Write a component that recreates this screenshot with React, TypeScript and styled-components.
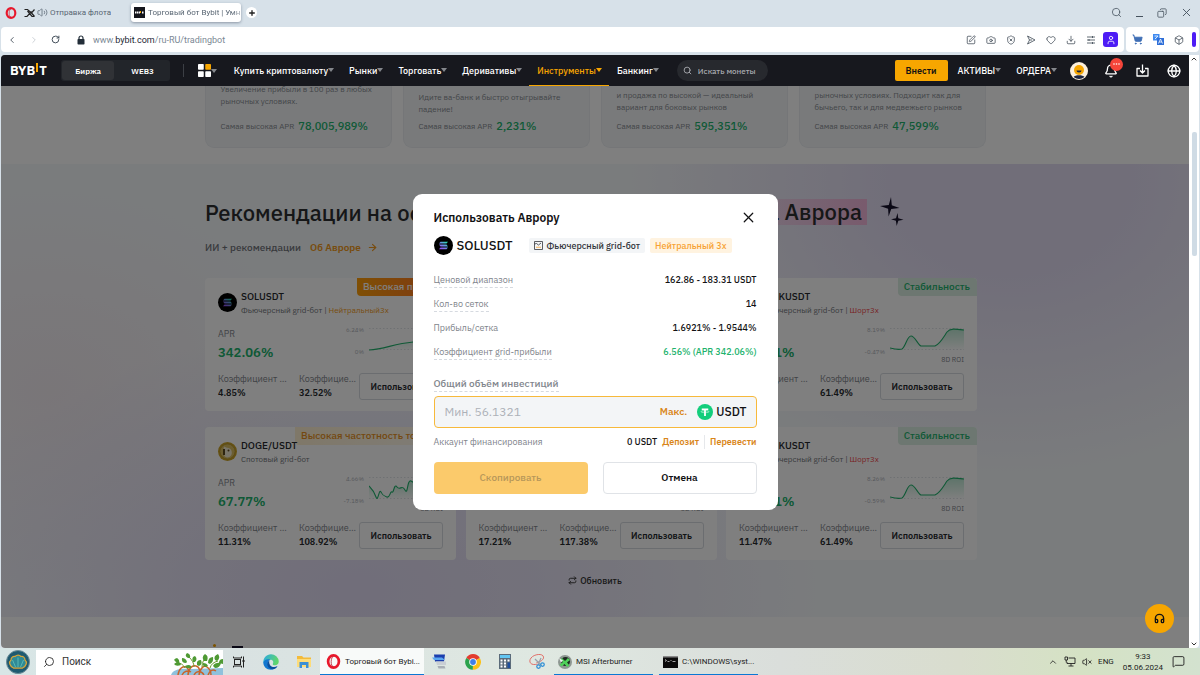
import React from 'react';
import styled, { createGlobalStyle, css } from 'styled-components';
import {
  Search, Copy, X, ChevronLeft, ChevronRight, ChevronUp, ChevronDown, RotateCw, SquarePen, Camera,
  ShieldX, Heart, Download, User, ShoppingCart, Box, Bell, Globe,
  Volume2, Plus, ArrowRight, Repeat, Headphones, VolumeX, MessageSquare,
} from 'lucide-react';

const SITE = '"IBM Plex Sans", "Noto Sans", sans-serif';
const SYSTEM = '"Segoe UI", Roboto, "Noto Sans", sans-serif';

const Global = createGlobalStyle`
  * { box-sizing: border-box; }
  html, body, #root { height: 100%; }
  body { margin: 0; overflow: hidden; background: #d7e1e9; font-family: ${SITE}; }
  button, input { font-family: inherit; border: 0; padding: 0; margin: 0; background: none; color: inherit; }
  a { color: inherit; text-decoration: none; }
  h1, h2, h3, p, dl, dd, dt { margin: 0; font-weight: inherit; font-size: inherit; }
  svg { display: block; flex: none; }
`;

const Window = styled.div`
  display: flex;
  flex-direction: column;
  height: 100%;
`;

/* ---------- browser chrome ---------- */

const TabStrip = styled.div`
  display: flex;
  align-items: center;
  height: 27px;
  flex: none;
  padding: 0 7px 2px 5px;
  font: 8px/12px ${SYSTEM};
  color: #596673;
`;

const Tab = styled.button<{ $active?: boolean }>`
  display: flex;
  align-items: center;
  gap: 3px;
  height: 19px;
  white-space: nowrap;
  overflow: hidden;
  font-size: 8px;
  ${p => p.$active
    ? css`width: 110px; margin-left: 20px; padding: 0 3px; background: #fff; border-radius: 3px; box-shadow: 0 1px 3px #8b97a5;
        span { -webkit-mask-image: linear-gradient(90deg, #000 80%, transparent); }`
    : css`margin-left: 7px; gap: 2px;`}
`;

const TabSiteIcon = styled.i`
  display: grid;
  place-items: center;
  flex: none;
  width: 11px;
  height: 11px;
  background: #14151c;
`;

const NewTab = styled.button`
  display: grid;
  place-items: center;
  width: 11px;
  height: 11px;
  margin-left: 5px;
  border-radius: 50%;
  background: #fff;
  color: #222;
`;

const WindowButtons = styled.div`
  display: flex;
  align-items: center;
  gap: 13px;
  margin-left: auto;
  color: #46525e;
`;

const IconButton = styled.button`
  display: grid;
  place-items: center;
`;

const ToolRow = styled.div`
  display: flex;
  gap: 2px;
  height: 25px;
  flex: none;
  padding: 0 1px;
`;

const AddressBar = styled.div`
  display: flex;
  align-items: center;
  flex: 1;
  padding: 0 6px;
  background: #fff;
  border-radius: 4px;
  color: #3b4652;
`;

const NavButtons = styled.div`
  display: flex;
  gap: 12px;
  margin-right: 17px;
`;

const Url = styled.a`
  flex: 1;
  margin-left: 8px;
  font: 9px/14px ${SYSTEM};
  color: #7b8894;
  b { font-weight: 400; color: #1d2733; }
`;

const ToolIcons = styled.div`
  display: flex;
  align-items: center;
  gap: 10px;
`;

const ProfileButton = styled(IconButton)`
  width: 15px;
  height: 15px;
  margin-left: -3px;
  border-radius: 3px;
  background: #4d1cf5;
  color: #fff;
`;

const ExtensionBar = styled.div`
  display: flex;
  align-items: center;
  gap: 10px;
  padding: 0 3px 0 6px;
  background: #fff;
  border-radius: 4px;
  color: #3b4652;
`;

const SidebarGrip = styled.i`
  width: 4px;
  height: 15px;
  margin-left: -2px;
  border-radius: 2px;
  background: #4d1cf5;
`;

/* ---------- page frame ---------- */

const Viewport = styled.div`
  display: flex;
  flex: 1;
  min-height: 0;
  margin: 3px 1px 0;
  border-radius: 4px 0 4px 4px;
  overflow: hidden;
  background: #fff;
`;

const Site = styled.div`
  position: relative;
  display: flex;
  flex-direction: column;
  flex: 1;
  min-width: 0;
  overflow: hidden;
`;

const ScrollBar = styled.div`
  display: flex;
  flex-direction: column;
  align-items: center;
  width: 10px;
  color: #333;
`;

const ScrollThumb = styled.i`
  width: 5px;
  height: 124px;
  margin: 69px 0 auto;
  border-radius: 2px;
  background: #cfdbe5;
`;

/* ---------- site header ---------- */

const Header = styled.header`
  position: relative;
  z-index: 2;
  display: flex;
  align-items: center;
  height: 31px;
  flex: none;
  padding: 0 8px 0 9px;
  background: #17181e;
  color: #fff;
`;

const Logo = styled.a`
  display: flex;
  align-items: center;
  gap: 1px;
  font: 700 13px/16px ${SITE};
  i { width: 2px; height: 9px; margin-bottom: 6px; background: #f7a600; }
`;

const ModeSwitch = styled.div`
  display: flex;
  width: 109px;
  height: 21px;
  margin-left: 14px;
  border-radius: 3px;
  background: #22252a;
`;

const Mode = styled.button<{ $on?: boolean }>`
  flex: 1;
  font-size: 8px;
  font-weight: 600;
  margin: 1px;
  border-radius: 3px;
  background: ${p => (p.$on ? '#303236' : 'transparent')};
`;

const Rule = styled.i`
  width: 1px;
  height: 13px;
  margin: 0 14px 0 13px;
  background: #3c3f45;
`;

const Menu = styled.nav`
  display: flex;
  align-self: stretch;
  margin-left: 10px;
`;

const MenuItem = styled.a<{ $on?: boolean }>`
  display: flex;
  align-items: center;
  padding: 0 8px;
  font-size: 9px;
  font-weight: 500;
  white-space: nowrap;
  color: ${p => (p.$on ? '#f7a600' : '#fff')};
  border-bottom: 1px solid ${p => (p.$on ? '#f7a600' : 'transparent')};
`;

const Caret = styled.i<{ $on?: boolean }>`
  border: 3px solid transparent;
  border-top: 4px solid ${p => (p.$on ? '#f7a600' : '#84878c')};
  border-bottom: 0;
  margin-right: -1px;
`;

const SearchPill = styled.label`
  display: flex;
  align-items: center;
  gap: 6px;
  width: 91px;
  height: 21px;
  margin-left: 11px;
  padding: 0 6px;
  border-radius: 11px;
  background: #27292e;
  color: #a6a8ad;
  input { width: 64px; outline: 0; font-size: 8px; font-weight: 500; }
  input::placeholder { color: #a6a8ad; opacity: 1; }
`;

const Account = styled.div`
  display: flex;
  align-items: center;
  margin-left: auto;
`;

const DepositButton = styled.button`
  width: 53px;
  height: 21px;
  margin-right: 2px;
  border-radius: 2px;
  background: #f7a600;
  color: #121214;
  font-size: 9px;
  font-weight: 600;
`;

const HeaderIcons = styled.div`
  display: flex;
  align-items: center;
  gap: 18px;
  margin-left: 6px;
`;

const BellWrap = styled(IconButton)`
  position: relative;
  margin-left: -2px;
`;

const BellBadge = styled.span`
  position: absolute;
  top: -6px;
  right: -5px;
  display: grid;
  place-items: center;
  width: 13px;
  height: 13px;
  border-radius: 50%;
  background: #f5453a;
`;

/* ---------- page content ---------- */

const Page = styled.main`
  display: flex;
  flex-direction: column;
  flex: 1;
  min-height: 0;
  overflow: hidden;
`;

const BotStrip = styled.section`
  display: grid;
  grid-template-columns: repeat(4, 187px);
  justify-content: center;
  gap: 11px;
  height: 78px;
  flex: none;
  padding-bottom: 16px;
`;

const BotCard = styled.article<{ $gap: number }>`
  display: flex;
  flex-direction: column;
  justify-content: flex-end;
  min-height: 0;
  padding: 0 0 14px 15px;
  border: 1px solid #eaedf1;
  border-top: 0;
  border-radius: 0 0 9px 9px;
  background: #f3f5f7;
  color: #868b91;
  font: 8px/12px ${SITE};
  white-space: nowrap;
  p { margin-bottom: ${p => p.$gap}px; }
`;

const BotApr = styled.div`
  display: flex;
  align-items: center;
  gap: 4px;
  height: 14px;
  flex: none;
  b { font: 500 11px/14px ${SITE}; color: #20b26c; }
`;

const Aurora = styled.section`
  display: flex;
  flex-direction: column;
  align-items: center;
  height: 453px;
  flex: none;
  padding-top: 34px;
  background:
    radial-gradient(ellipse 380px 290px at 85% 4%, #e2dcf3 0%, #e2dcf3 30%, #e2dcf300 100%),
    radial-gradient(ellipse 460px 260px at 30% 94%, #e2dcf4 0%, #e2dcf4bb 40%, #e2dcf400 100%),
    radial-gradient(ellipse 260px 200px at 4% 50%, #f3ecf1 0%, #f3ecf100 100%),
    #f5f8fb;
`;

const AuroraInner = styled.div`
  display: flex;
  flex-direction: column;
  width: 772px;
  margin-right: 8px;
`;

const Title = styled.h1`
  display: flex;
  align-items: center;
  height: 28px;
  font-size: 22px;
  font-weight: 500;
  color: #2c2e31;
  white-space: nowrap;
  mark {
    height: 26px;
    line-height: 26px;
    margin-left: auto;
    padding: 0 5px 0 20px;
    color: inherit;
    background: linear-gradient(90deg, #f9c5e000 30%, #f2b6da);
  }
  svg { margin: 0 73px 0 13px; }
`;

const Lead = styled.p`
  display: flex;
  align-items: center;
  gap: 9px;
  margin-top: 13px;
  height: 16px;
  font-size: 10px;
  font-weight: 500;
  color: #71757a;
  a { display: flex; align-items: center; gap: 6px; color: #f19a20; font-weight: 600; }
`;

const StrategyGrid = styled.div`
  display: grid;
  grid-template-columns: repeat(3, 251px);
  justify-content: space-between;
  gap: 16px 0;
  margin-top: 23px;
`;

const StrategyCard = styled.article`
  position: relative;
  display: flex;
  flex-direction: column;
  height: 133px;
  padding: 11px 13px;
  border-radius: 4px;
  background: #fff;
`;

const Ribbon = styled.span<{ $tone: string }>`
  position: absolute;
  top: 0;
  right: 0;
  height: 18px;
  padding: 0 7px 0 6px;
  border-radius: 0 4px 0 4px;
  font: 500 10px/18px ${SITE};
  white-space: nowrap;
  ${p => p.$tone === 'hot' && css`background: linear-gradient(90deg, #ff9f0a, #ff6b2c); color: #fff;`}
  ${p => p.$tone === 'busy' && css`background: linear-gradient(90deg, #fff0d2, #fffaf0); color: #e99122;`}
  ${p => p.$tone === 'calm' && css`background: #dbeee2; color: #20b26c;`}
`;

const Pair = styled.header`
  position: relative;
  z-index: 1;
  display: flex;
  align-items: center;
  gap: 4px;
  height: 27px;
  h3 { font: 500 10px/14px ${SITE}; color: #25282c; }
  p { font: 8px/12px ${SITE}; color: #71757a; white-space: nowrap; }
  em { font-style: normal; color: #f19a20; }
  em.short { color: #ef454a; }
`;

const Middle = styled.div`
  display: flex;
  justify-content: space-between;
  height: 52px;
  padding-top: 10px;
`;

const Apr = styled.dl`
  dt { font-size: 9px; line-height: 16px; color: #81858c; }
  dd { font-size: 13px; line-height: 21px; font-weight: 600; color: #20b26c; }
`;

const Plot = styled.figure`
  display: grid;
  grid-template-columns: 30px 74px;
  gap: 0 5px;
  margin: 0;
  color: #adb1b8;
  font: 6px/8px ${SITE};
  text-align: right;
  figcaption { grid-column: 2; font-size: 7px; line-height: 8px; color: #81858c; }
`;

const Scale = styled.div`
  display: flex;
  flex-direction: column;
  justify-content: space-between;
`;

const Footer = styled.footer`
  display: flex;
  align-items: center;
  margin-top: auto;
`;

const Stat = styled.dl<{ $w: number; $mr: number }>`
  width: ${p => p.$w}px;
  margin-right: ${p => p.$mr}px;
  font-size: 9px;
  line-height: 14px;
  dt { overflow: hidden; text-overflow: ellipsis; white-space: nowrap; color: #81858c; }
  dd { font-weight: 600; color: #25282c; }
`;

const UseButton = styled.button`
  width: 84px;
  height: 27px;
  margin: 0 0 0 auto;
  border: 1px solid #d6dae0;
  border-radius: 3px;
  font-size: 9px;
  font-weight: 600;
  color: #25282c;
`;

const Refresh = styled.button`
  display: flex;
  align-items: center;
  gap: 3px;
  height: 16px;
  margin-top: 12px;
  font-size: 9px;
  font-weight: 500;
  color: #333;
`;

const NextSection = styled.section`
  display: flex;
  align-items: flex-end;
  gap: 16px;
  flex: 1;
  min-height: 0;
  padding-left: 212px;
  background: #fff;
  i { width: 3px; height: 3px; margin-bottom: 1px; border-radius: 50%; background: #f7a600; }
  b { width: 11px; height: 2px; background: #14102a; }
`;

const SupportButton = styled.button`
  position: absolute;
  z-index: 3;
  right: 15px;
  bottom: 15px;
  display: grid;
  place-items: center;
  width: 29px;
  height: 29px;
  border-radius: 50%;
  background: #f7a600;
  color: #121214;
`;

/* ---------- dialog ---------- */

const Backdrop = styled.div`
  position: absolute;
  inset: 0;
  z-index: 1;
  display: grid;
  place-items: center;
  background: rgba(0, 0, 0, 0.5);
`;

const Dialog = styled.section`
  width: 365px;
  padding: 14px 21px 16px 21px;
  border-radius: 9px;
  background: #fff;
  color: #121214;
`;

const DialogHead = styled.header`
  display: flex;
  align-items: center;
  justify-content: space-between;
  height: 20px;
  font-size: 12px;
  font-weight: 600;
`;

const Market = styled.div`
  display: flex;
  align-items: center;
  height: 20px;
  margin-top: 8px;
  h3 { margin: 0 16px 0 4px; font-size: 13px; font-weight: 500; }
`;

const Chip = styled.span<{ $warm?: boolean }>`
  display: flex;
  align-items: center;
  gap: 4px;
  height: 15px;
  margin-right: 5px;
  padding: 0 5px;
  border-radius: 2px;
  font-size: 9px;
  font-weight: 500;
  white-space: nowrap;
  background: ${p => (p.$warm ? '#fff3e0' : '#f3f5f7')};
  color: ${p => (p.$warm ? '#f7a233' : '#33363b')};
`;

const Facts = styled.dl`
  margin-top: 12px;
`;

const Fact = styled.div<{ $good?: boolean }>`
  display: flex;
  align-items: center;
  justify-content: space-between;
  height: 24px;
  font-size: 9px;
  dd { font-weight: 500; color: ${p => (p.$good ? '#20b26c' : '#121214')}; }
`;

const Hint = styled.dt<{ $plain?: boolean }>`
  line-height: 15px;
  color: #81858c;
  border-bottom: 1px dashed ${p => (p.$plain ? 'transparent' : '#d6dae0')};
`;

const AmountLabel = styled.label`
  display: block;
  width: fit-content;
  height: 16px;
  margin-top: 12px;
  font-size: 10px;
  font-weight: 500;
  line-height: 16px;
  color: #81858c;
  border-bottom: 1px dashed #d6dae0;
`;

const AmountBox = styled.div`
  display: flex;
  align-items: center;
  height: 32px;
  margin-top: 4px;
  padding: 0 9px 0 10px;
  border: 1px solid #f7b93b;
  border-radius: 4px;
  background: #f3f5f7;
  font-size: 12px;
  font-weight: 500;
  input { flex: 1; min-width: 0; outline: 0; font-size: 12px; }
  input::placeholder { color: #adb1b8; opacity: 1; }
  svg { margin: 0 3px 0 10px; }
`;

const LinkButton = styled.button<{ $size: number }>`
  font-size: ${p => p.$size}px;
  font-weight: 600;
  color: #d98619;
`;

const Balance = styled.div`
  display: flex;
  align-items: center;
  height: 20px;
  margin-top: 4px;
  font-size: 9px;
  font-weight: 500;
  span { margin-right: auto; color: #81858c; font-weight: 400; }
  output { margin-right: 5px; }
  i { width: 1px; height: 14px; margin: 0 5px; background: #e6e8eb; }
`;

const Actions = styled.div`
  display: grid;
  grid-template-columns: 1fr 1fr;
  gap: 15px;
  margin-top: 10px;
`;

const ActionButton = styled.button<{ $primary?: boolean }>`
  height: 32px;
  border-radius: 4px;
  font-size: 10px;
  font-weight: 600;
  ${p => p.$primary
    ? css`background: #fbca6b; color: #b6975a; font-weight: 500;`
    : css`border: 1px solid #e0e3e7; color: #121214;`}
`;

/* ---------- taskbar ---------- */

const TaskBar = styled.div`
  display: flex;
  align-items: center;
  height: 27px;
  flex: none;
  background: linear-gradient(90deg, #d8e6e6 0%, #d9e2e2 20%, #dfe8e1 45%, #dadedb 65%, #d9ddce 80%, #d5e2c4 90%, #d3e2cf 100%);
  font: 8px/12px ${SYSTEM};
  color: #222;
`;

const SearchBox = styled.label`
  display: flex;
  align-items: center;
  gap: 7px;
  width: 187px;
  height: 25px;
  margin: 1px 8px 0 6px;
  padding-left: 7px;
  overflow: hidden;
  background: #fff;
  input { width: 100px; outline: 0; font: 10px/14px ${SYSTEM}; }
  input::placeholder { color: #333; opacity: 1; }
  > svg:last-child { align-self: flex-end; margin-left: auto; }
`;

const Apps = styled.div`
  display: flex;
  align-items: center;
  gap: 18px;
  margin: 0 9px 0 2px;
`;

const Task = styled.button<{ $w: number; $on?: boolean }>`
  display: flex;
  align-items: center;
  gap: 4px;
  width: ${p => p.$w}px;
  height: 27px;
  padding-left: ${p => (p.$on ? 6 : 4)}px;
  margin-right: 6px;
  font-size: 8px;
  white-space: nowrap;
  background: ${p => (p.$on ? '#f8faf9' : 'transparent')};
  border-top: 1px solid transparent;
  border-bottom: 1px solid #0a78d4;
`;

const Tray = styled.div`
  display: flex;
  align-items: center;
  gap: 6px;
  margin-left: auto;
  padding-right: 15px;
  time { margin: 0 3px; text-align: center; line-height: 11px; }
`;

/* ---------- drawings ---------- */

const OperaLogo = ({ size }: { size: number }) => (
  <svg width={size} height={size} viewBox="0 0 20 20">
    <ellipse cx="10" cy="10" rx="7.2" ry="8.2" fill="none" stroke="#e8182c" strokeWidth="3.6" />
    <path d="M10 3.2c-3.6 0-4.6 13.600 0 13.600" fill="none" stroke="#b50f24" strokeWidth="1" />
  </svg>
);

const TabCross = () => (
  <svg width="11" height="10" viewBox="0 0 22 20">
    <path d="M1 3h6l8 7 6-7M1 17h5l9-10M21 17h-5L7 6M15 10l6 7" fill="none" stroke="#222" strokeWidth="2.400" />
  </svg>
);

const MinimizeIcon = () => (
  <svg width="9" height="11" viewBox="0 0 9 11"><path d="M1 9.500h7" stroke="#46525e" strokeWidth="1" /></svg>
);

const LockIcon = () => (
  <svg width="8" height="10" viewBox="0 0 16 20">
    <rect x="1" y="8" width="14" height="11" rx="1.500" fill="#222d38" />
    <path d="M4 9V6a4 4 0 0 1 8 0v3" fill="none" stroke="#222d38" strokeWidth="2.400" />
  </svg>
);

const FlowIcon = () => (
  <svg width="10" height="10" viewBox="0 0 20 20" fill="none" stroke="#3b4652" strokeWidth="1.600" strokeLinejoin="round">
    <path d="M3 2l15 8-15 8 4-8zM7 10h5" />
  </svg>
);

const EasySetupIcon = () => (
  <svg width="10" height="10" viewBox="0 0 20 20" fill="none" stroke="#3b4652" strokeWidth="1.600">
    <path d="M2 4h16M2 10h16M2 16h16M13 2v4M6 8v4M13 14v4" />
  </svg>
);

const TranslateIcon = () => (
  <svg width="11" height="11" viewBox="0 0 22 22">
    <rect width="13" height="13" fill="#3f8af0" /><rect x="8" y="8" width="14" height="14" fill="#2f6fd8" />
    <path d="M3 4h7L4 10M11 19l4-9 4 9M12.500 16h5" stroke="#fff" strokeWidth="1.600" fill="none" />
  </svg>
);

const NetworkIcon = () => (
  <svg width="12" height="11" viewBox="0 0 24 22" fill="none" stroke="#222" strokeWidth="1.800">
    <path d="M9 4h13v11H6v-3M14 15v5M9 20h10M2 2h5v6H2zM4.500 8v5" />
  </svg>
);

const SolanaCoin = () => (
  <svg width="19" height="19" viewBox="0 0 38 38">
    <defs>
      <linearGradient id="sol" x1="0" y1="1" x2="1" y2="0">
        <stop offset="0" stopColor="#a340f5" />
        <stop offset="0.500" stopColor="#6f8be8" />
        <stop offset="1" stopColor="#19f0a5" />
      </linearGradient>
    </defs>
    <circle cx="19" cy="19" r="19" fill="#000" />
    <path d="M13 11.500h15l-3 3.600H10zM10 17.200h15l3 3.600H13zM13 23h15l-3 3.600H10z" fill="url(#sol)" />
  </svg>
);

const DogeCoin = () => (
  <svg width="19" height="19" viewBox="0 0 38 38">
    <circle cx="19" cy="19" r="19" fill="#c9a227" />
    <circle cx="19" cy="19" r="15" fill="#d9bd62" stroke="#a5841c" />
    <path d="M12 9c4 1 5 3 9 3 8 2 9 14 2 18-5 2-10 0-11-4-2-6-1-12 0-17z" fill="#f3ead0" />
    <path d="M10 14h4v12h-4z" fill="#5d4a1e" />
    <circle cx="21" cy="17" r="2" fill="#5d4a1e" />
  </svg>
);

const LinkCoin = () => (
  <svg width="19" height="19" viewBox="0 0 38 38">
    <circle cx="19" cy="19" r="19" fill="#2a5ada" />
    <path d="M19 9l9 5v10l-9 5-9-5V14z" fill="none" stroke="#fff" strokeWidth="4" />
  </svg>
);

const TetherCoin = () => (
  <svg width="16" height="16" viewBox="0 0 32 32">
    <circle cx="16" cy="16" r="16" fill="#13ce7c" />
    <path d="M9.500 9h13v3.600h-4.700V24h-3.600V12.600H9.500z" fill="#fff" />
    <path d="M8 15.500c0-2.400 16-2.400 16 0s-16 2.400-16 0z" fill="none" stroke="#fff" strokeWidth="1" />
  </svg>
);

const GridBotIcon = () => (
  <svg width="9" height="9" viewBox="0 0 18 18" fill="none" stroke="#33363b" strokeWidth="1.600">
    <path d="M1 1h16v16H1z" />
    <path d="M1 6l4-1 4 3 5-4" />
    <path d="M4 12.500h10" stroke="#f7a233" />
  </svg>
);

const Sparkles = () => (
  <svg width="24" height="30" viewBox="0 0 24 30" fill="#14102a">
    <path d="M11 0l.8 8.300 7.700 2.700-8.300 1-2.600 7.500-.5-7.800L0 9l8.800-1z" />
    <path d="M17.500 16l.8 5.200 5.200 1.600-5.200.9-1.600 5.300-.8-5.300-4.900-1.500 5-.9z" />
  </svg>
);

const ProductsIcon = () => (
  <svg width="13" height="13" viewBox="0 0 26 26" fill="#fff">
    <rect width="11.500" height="11.500" rx="1.500" />
    <rect x="14.500" width="11.500" height="11.500" rx="1.500" fill="#f7a600" />
    <rect y="14.500" width="11.500" height="11.500" rx="1.500" />
    <rect x="14.500" y="14.500" width="11.500" height="11.500" rx="1.500" />
  </svg>
);

const Avatar = () => (
  <svg width="18" height="18" viewBox="0 0 36 36">
    <circle cx="18" cy="18" r="18" fill="#fdf0dc" />
    <path d="M7 30c3-5 19-5 22 0a18 18 0 0 1-22 0z" fill="#1c2440" />
    <circle cx="18" cy="16" r="10" fill="#f7a600" />
    <path d="M13 17h10a5 4 0 0 1-10 0z" fill="#1c2440" />
  </svg>
);

const InboxIcon = () => (
  <svg width="13" height="13" viewBox="0 0 26 26" fill="none" stroke="#fff" strokeWidth="2.600" strokeLinejoin="round">
    <path d="M8 9H2v15h22V9h-6M13 1v17M8 13l5 5 5-5" />
  </svg>
);

const StartOrb = () => (
  <svg width="30" height="24" viewBox="-12 0 60 48">
    <circle cx="24" cy="24" r="23" fill="#1f5a70" stroke="#6e8d98" strokeWidth="2" />
    <path d="M15 36c-8-4-10-12-5-16 0-6 5-8 8-7 4-4 9-4 12 0 4-1 8 2 8 7 5 4 3 12-5 16z" fill="#2f8a96" stroke="#d7a53a" strokeWidth="2.500" />
    <path d="M24 34V15M19 34l-6-14M29 34l6-14" stroke="#58b9b4" strokeWidth="2" />
  </svg>
);

const Vegetables = () => (
  <svg width="52" height="22" viewBox="0 0 104 44">
    <path d="M0 44c4-12 20-14 40-12l64-2v14z" fill="#8fc1dc" />
    <g fill="none" stroke="#c8642a" strokeWidth="3">
      <path d="M14 44c2-14 10-18 16-16s6 10 4 16M34 44c0-12 8-20 16-18s8 10 6 18M56 44c2-14 10-20 16-16s8 10 8 16M22 44c4-8 12-10 18-6M46 44c4-8 14-10 20 0M74 44c4-10 10-12 16-8" />
    </g>
    <g fill="none" stroke="#6a9a2e" strokeWidth="2">
      <path d="M28 30c-4-8-10-10-18-12M46 28c0-8-4-14-10-20M62 28c0-10 4-16 10-22M78 30c2-8 8-12 16-14" />
    </g>
    <g fill="#4f9a34">
      <path d="M10 18q-8-6 2-8 6 4 4 10zM20 24q-10 4-14-2 6-6 12-2zM34 10q-8-4-2-10 8 2 6 10zM30 20q-10 0-8-10 8 0 10 8zM44 18q-4-10 4-12 6 6 0 12zM52 24q-2-10 8-10 4 8-4 12zM66 16q-6-8 2-14 8 4 4 14zM74 20q0-12 10-12 2 10-6 14zM88 14q-4-8 6-12 6 8-2 14zM84 26q4-8 16-6-2 10-12 10zM96 20q0-8 8-8v10zM40 30q-10 2-12-4 8-4 12 0zM70 28q-8-2-6-8 8 0 10 6z" />
    </g>
  </svg>
);

const TaskViewIcon = () => (
  <svg width="12" height="12" viewBox="0 0 24 24" fill="none" stroke="#222" strokeWidth="2">
    <rect x="3" y="7" width="12" height="10" /><path d="M1 1v3h16V1M1 23v-3h16v3M21 1v22" /><path d="M19 10h4" strokeWidth="4" />
  </svg>
);

const EdgeIcon = () => (
  <svg width="16" height="16" viewBox="0 0 32 32">
    <defs>
      <linearGradient id="edge" x1="0" y1="0" x2="1" y2="0.300">
        <stop offset="0" stopColor="#2aa9e6" /><stop offset="1" stopColor="#5fd66b" />
      </linearGradient>
    </defs>
    <path d="M16 .5A15.500 15.500 0 0 1 31.500 15c0 5-3.500 7.500-7.500 7.500-3 0-5-1-4.500-2.500C22 16 20 11.500 15 11.500 8 11.500 3 15 .6 18 0 8 7 .5 16 .5z" fill="url(#edge)" />
    <path d="M.6 17C3 11 9 9.500 15 11.500c-5 1-6.500 6-4.500 10.500 3 6 12 7 18.500 2.500C25 30 20 31.500 16 31.500 7 31.500.6 25 .6 17z" fill="#1377cf" />
    <path d="M13 12.500c-7 5-5 15 3 17.500 5 1 10-1 13-5.500-6 3-13 2-15.500-3.500-1.300-3-1.500-6-.5-8.500z" fill="#0c4f9e" />
  </svg>
);

const ExplorerIcon = () => (
  <svg width="14" height="13" viewBox="0 0 28 26">
    <path d="M0 2h10l3 3h15v19H0z" fill="#f3bb3a" /><path d="M0 8h28v16H0z" fill="#fddc7a" />
    <path d="M5 14h18v12h-5v-6h-8v6H5z" fill="#3b8fd6" />
  </svg>
);

const RemoteIcon = () => (
  <svg width="15" height="15" viewBox="0 0 30 30">
    <path d="M4 1h22l-2 14H6z" fill="#1b3fae" /><path d="M0 7h20l6 5H4z" fill="#5aa7f0" />
    <path d="M8 15h20v7H10z" fill="#c9ced4" /><path d="M11 24h14l2 5H13z" fill="#a8aeb5" />
  </svg>
);

const ChromeIcon = () => (
  <svg width="16" height="16" viewBox="0 0 32 32">
    <path d="M16 16L2.600 8a15.500 15.500 0 0 1 27 0z" fill="#e33b2e" />
    <path d="M16 16L29.600 8a15.500 15.500 0 0 1-14 23.500z" fill="#fbc116" />
    <path d="M16 16l-.4 15.500A15.500 15.500 0 0 1 2.600 8z" fill="#2ba24c" />
    <circle cx="16" cy="16" r="7.500" fill="#fff" /><circle cx="16" cy="16" r="5.800" fill="#3f7fe8" />
  </svg>
);

const CalculatorIcon = () => (
  <svg width="12" height="15" viewBox="0 0 24 30">
    <rect width="24" height="30" fill="#5b6b7a" /><rect x="2" y="2" width="20" height="6" fill="#62c6f2" />
    <path d="M3 11h4v4H3zM10 11h4v4h-4zM3 17h4v4H3zM10 17h4v4h-4zM3 23h4v4H3zM10 23h4v4h-4zM17 11h4v4h-4z" fill="#fff" />
    <path d="M17 17h5v11h-5z" fill="#1f4f9e" />
  </svg>
);

const SnipIcon = () => (
  <svg width="16" height="15" viewBox="0 0 32 30" fill="none">
    <path d="M17 20C4 24-2 16 4 8S28-2 29 6c1 5-6 10-14 11" stroke="#e0706a" strokeWidth="2" />
    <path d="M12 10l12 12M24 8l-6 14" stroke="#98a2ac" strokeWidth="2.500" />
    <circle cx="19" cy="25" r="3.500" stroke="#2f8fd6" strokeWidth="2.500" /><circle cx="27" cy="21" r="3.500" stroke="#2f8fd6" strokeWidth="2.500" />
  </svg>
);

const AfterburnerIcon = () => (
  <svg width="14" height="14" viewBox="0 0 28 28">
    <circle cx="14" cy="14" r="14" fill="#8e9792" /><circle cx="15" cy="13" r="9" fill="#1d2a20" />
    <path d="M8 6l6 6 6-6 4 4-6 5 5 6-5 3-5-6-6 5-4-4 7-5-6-4z" fill="#4fd05a" /><path d="M2 6l8 5-4 4z" fill="#eee" />
  </svg>
);

const ConsoleIcon = () => (
  <svg width="15" height="12" viewBox="0 0 30 24">
    <rect width="30" height="24" fill="#0b0b0b" /><rect width="30" height="3" fill="#8a8a8a" />
    <path d="M4 7l3 2-3 2M9 11h4M15 9h2M19 11h6" stroke="#ddd" strokeWidth="1.500" fill="none" />
  </svg>
);

/* ---------- data ---------- */

const CURVES = {
  rise: 'M0 22C16 21 24 16 44 14S62 5 74 4',
  zigzag: 'M0 9C3 12 5 14 7 20S10 11 12 15 15 19 18 20 21 14 23 15 25 6 28 10 33 7 36 13 38 2 42 4 48 10 53 8 61 5 66 11 70 4 74 6',
  hill: 'M0 20C4 21 8 22 12 21C16 18 17 8 21 8S28 17 31 18H45C50 16 53 10 57 4C60 0 66 1 74 2',
};

const STRATEGIES = [
  { pair: 'SOLUSDT', Coin: SolanaCoin, kind: 'Фьючерсный grid-бот', side: 'Нейтральный3x', tone: 'hot', tag: 'Высокая прибыль', apr: '342.06%', hi: '6.24%', lo: '0%', curve: CURVES.rise, a: '4.85%', b: '32.52%' },
  { pair: 'ETHUSDT', Coin: LinkCoin, kind: 'Фьючерсный grid-бот', side: 'Нейтральный3x', tone: 'calm', tag: 'Стабильность', apr: '121.40%', hi: '4.12%', lo: '0%', curve: CURVES.rise, a: '9.16%', b: '48.30%' },
  { pair: 'LINKUSDT', Coin: LinkCoin, kind: 'Фьючерсный grid-бот', side: 'Шорт3x', tone: 'calm', tag: 'Стабильность', apr: '198.31%', hi: '8.19%', lo: '-0.47%', curve: CURVES.hill, a: '11.47%', b: '61.49%' },
  { pair: 'DOGE/USDT', Coin: DogeCoin, kind: 'Спотовый grid-бот', side: '', tone: 'busy', tag: 'Высокая частотность торговли', apr: '67.77%', hi: '4.66%', lo: '-7.18%', curve: CURVES.zigzag, a: '11.31%', b: '108.92%' },
  { pair: 'SOL/USDT', Coin: SolanaCoin, kind: 'Спотовый grid-бот', side: '', tone: 'calm', tag: 'Стабильность', apr: '84.15%', hi: '5.02%', lo: '-3.10%', curve: CURVES.zigzag, a: '17.21%', b: '117.38%' },
  { pair: 'LINKUSDT', Coin: LinkCoin, kind: 'Фьючерсный grid-бот', side: 'Шорт3x', tone: 'calm', tag: 'Стабильность', apr: '200.21%', hi: '8.26%', lo: '-0.59%', curve: CURVES.hill, a: '11.47%', b: '61.49%' },
];

const BOTS: { lines: string[]; apr: string; gap: number }[] = [
  { lines: ['Увеличение прибыли в 100 раз в любых', 'рыночных условиях.'], apr: '78,005,989%', gap: 12 },
  { lines: ['Идите ва-банк и быстро отыгрывайте', 'падение!'], apr: '2,231%', gap: 4 },
  { lines: ['и продажа по высокой — идеальный', 'вариант для боковых рынков'], apr: '595,351%', gap: 6 },
  { lines: ['рыночных условиях. Подходит как для', 'бычьего, так и для медвежьего рынков'], apr: '47,599%', gap: 6 },
];

const MENU = ['Купить криптовалюту', 'Рынки', 'Торговать', 'Деривативы', 'Инструменты', 'Банкинг'];

const Chart = ({ curve, id }: { curve: string; id: string }) => (
  <svg width="74" height="25" viewBox="0 -2 74 25">
    <defs>
      <linearGradient id={id} x1="0" y1="0" x2="0" y2="1">
        <stop offset="0" stopColor="#20b26c" stopOpacity="0.300" />
        <stop offset="1" stopColor="#20b26c" stopOpacity="0" />
      </linearGradient>
    </defs>
    <path d="M0 0.500H74M0 21.500H74" stroke="#dfe2e6" strokeDasharray="1.500 2" />
    <path d={`${curve}V22H0z`} fill={`url(#${id})`} />
    <path d={curve} fill="none" stroke="#20b26c" strokeWidth="1.100" />
  </svg>
);

export default function App() {
  return (
    <Window>
      <Global />
      <TabStrip>
        <OperaLogo size={12} />
        <Tab><TabCross /><Volume2 size={11} strokeWidth={1.7} /><span>Отправка флота</span></Tab>
        <Tab $active>
          <TabSiteIcon><svg width="9" height="3" viewBox="0 0 9 3"><path d="M0 1.500h5M7 1.500h2" stroke="#fff" strokeWidth="2" strokeDasharray="1.500 .5" /><path d="M5.500 0v2" stroke="#f7a600" /></svg></TabSiteIcon>
          <span>Торговый бот Bybit | Умные</span>
        </Tab>
        <NewTab aria-label="Новая вкладка"><Plus size={8} strokeWidth={4} /></NewTab>
        <WindowButtons>
          <IconButton aria-label="Поиск вкладок"><Search size={11} strokeWidth={1.7} /></IconButton>
          <IconButton aria-label="Свернуть"><MinimizeIcon /></IconButton>
          <IconButton aria-label="Развернуть"><Copy size={10} strokeWidth={1.9} transform="scale(-1 1)" /></IconButton>
          <IconButton aria-label="Закрыть"><X size={13} strokeWidth={1.7} /></IconButton>
        </WindowButtons>
      </TabStrip>
      <ToolRow>
        <AddressBar>
          <NavButtons>
            <IconButton aria-label="Назад"><ChevronLeft size={10} /></IconButton>
            <IconButton aria-label="Вперёд"><ChevronRight size={10} color="#c3c9cf" /></IconButton>
            <IconButton aria-label="Обновить"><RotateCw size={9} strokeWidth={2.5} /></IconButton>
          </NavButtons>
          <LockIcon />
          <Url href="#">www.<b>bybit.com</b>/ru-RU/tradingbot</Url>
          <ToolIcons>
            <SquarePen size={10} strokeWidth={1.8} />
            <Camera size={10} strokeWidth={1.8} />
            <ShieldX size={10} strokeWidth={1.8} />
            <FlowIcon />
            <Heart size={10} strokeWidth={1.8} />
            <Download size={10} strokeWidth={1.8} />
            <EasySetupIcon />
            <ProfileButton aria-label="Профиль"><User size={10} strokeWidth={2} /></ProfileButton>
          </ToolIcons>
        </AddressBar>
        <ExtensionBar>
          <ShoppingCart size={11} fill="#3f6fb5" color="#3f6fb5" />
          <TranslateIcon />
          <Box size={10} strokeWidth={1.8} />
          <SidebarGrip />
        </ExtensionBar>
      </ToolRow>

      <Viewport>
        <Site>
          <Header>
            <Logo href="#"><span>BYB</span><i /><span>T</span></Logo>
            <ModeSwitch><Mode $on>Биржа</Mode><Mode>WEB3</Mode></ModeSwitch>
            <Rule />
            <ProductsIcon />
            <Caret />
            <Menu>
              {MENU.map(m => (
                <MenuItem key={m} href="#" $on={m === 'Инструменты'}>{m}<Caret $on={m === 'Инструменты'} /></MenuItem>
              ))}
            </Menu>
            <SearchPill><Search size={9} strokeWidth={2.5} /><input aria-label="Поиск" placeholder="Искать монеты" /></SearchPill>
            <Account>
              <DepositButton>Внести</DepositButton>
              <MenuItem href="#">АКТИВЫ<Caret /></MenuItem>
              <MenuItem href="#">ОРДЕРА<Caret /></MenuItem>
              <HeaderIcons>
                <Avatar />
                <BellWrap aria-label="Уведомления">
                  <Bell size={14} strokeWidth={2.3} />
                  <BellBadge><svg width="7" height="2" viewBox="0 0 7 2" fill="#fff"><circle cx="1" cy="1" r=".8" /><circle cx="3.500" cy="1" r=".8" /><circle cx="6" cy="1" r=".8" /></svg></BellBadge>
                </BellWrap>
                <InboxIcon />
                <Globe size={14} strokeWidth={2.3} />
              </HeaderIcons>
            </Account>
          </Header>

          <Page>
            <BotStrip>
              {BOTS.map(b => (
                <BotCard key={b.apr} $gap={b.gap}>
                  <p>{b.lines[0]}<br />{b.lines[1]}</p>
                  <BotApr>Самая высокая APR<b>{b.apr}</b></BotApr>
                </BotCard>
              ))}
            </BotStrip>
            <Aurora>
              <AuroraInner>
                <Title><span>Рекомендации на основе технологий</span><mark>интеллекта Аврора</mark><Sparkles /></Title>
                <Lead>ИИ + рекомендации <a href="#">Об Авроре <ArrowRight size={11} strokeWidth={2.5} /></a></Lead>
                <StrategyGrid>
                  {STRATEGIES.map((s, i) => (
                    <StrategyCard key={i}>
                      <Ribbon $tone={s.tone}>{s.tag}</Ribbon>
                      <Pair>
                        <s.Coin />
                        <div>
                          <h3>{s.pair}</h3>
                          <p>{s.kind}{s.side && <> | <em className={s.side === 'Шорт3x' ? 'short' : ''}>{s.side}</em></>}</p>
                        </div>
                      </Pair>
                      <Middle>
                        <Apr><dt>APR</dt><dd>{s.apr}</dd></Apr>
                        <Plot>
                          <Scale><span>{s.hi}</span><span>{s.lo}</span></Scale>
                          <Chart curve={s.curve} id={`fill${i}`} />
                          <figcaption>8D ROI</figcaption>
                        </Plot>
                      </Middle>
                      <Footer>
                        <Stat $w={70} $mr={11}><dt>Коэффициент grid-прибыли</dt><dd>{s.a}</dd></Stat>
                        <Stat $w={58} $mr={0}><dt>Коэффициент просадки</dt><dd>{s.b}</dd></Stat>
                        <UseButton>Использовать</UseButton>
                      </Footer>
                    </StrategyCard>
                  ))}
                </StrategyGrid>
              </AuroraInner>
              <Refresh><Repeat size={9} strokeWidth={2.5} />Обновить</Refresh>
            </Aurora>
            <NextSection><i /><b /></NextSection>
          </Page>

          <Backdrop>
            <Dialog role="dialog" aria-labelledby="dialog-title">
              <DialogHead>
                <h2 id="dialog-title">Использовать Аврору</h2>
                <IconButton aria-label="Закрыть"><X size={17} strokeWidth={1.7} /></IconButton>
              </DialogHead>
              <Market>
                <SolanaCoin />
                <h3>SOLUSDT</h3>
                <Chip><GridBotIcon />Фьючерсный grid-бот</Chip>
                <Chip $warm>Нейтральный 3x</Chip>
              </Market>
              <Facts>
                <Fact><Hint>Ценовой диапазон</Hint><dd>162.86 - 183.31 USDT</dd></Fact>
                <Fact><Hint>Кол-во сеток</Hint><dd>14</dd></Fact>
                <Fact><Hint $plain>Прибыль/сетка</Hint><dd>1.6921% - 1.9544%</dd></Fact>
                <Fact $good><Hint>Коэффициент grid-прибыли</Hint><dd>6.56% (APR 342.06%)</dd></Fact>
              </Facts>
              <AmountLabel htmlFor="amount">Общий объём инвестиций</AmountLabel>
              <AmountBox>
                <input id="amount" placeholder="Мин. 56.1321" />
                <LinkButton $size={10}>Макс.</LinkButton>
                <TetherCoin />
                USDT
              </AmountBox>
              <Balance>
                <span>Аккаунт финансирования</span>
                <output>0 USDT</output>
                <LinkButton $size={9}>Депозит</LinkButton>
                <i />
                <LinkButton $size={9}>Перевести</LinkButton>
              </Balance>
              <Actions>
                <ActionButton $primary disabled>Скопировать</ActionButton>
                <ActionButton>Отмена</ActionButton>
              </Actions>
            </Dialog>
          </Backdrop>
          <SupportButton aria-label="Поддержка"><Headphones size={11} strokeWidth={3} /></SupportButton>
        </Site>
        <ScrollBar>
          <ChevronUp size={8} strokeWidth={3} />
          <ScrollThumb />
          <ChevronDown size={8} strokeWidth={3} />
        </ScrollBar>
      </Viewport>

      <TaskBar>
        <StartOrb />
        <SearchBox><Search size={12} strokeWidth={1.7} transform="scale(-1 1)" /><input aria-label="Поиск Windows" placeholder="Поиск" /><Vegetables /></SearchBox>
        <Apps>
          <TaskViewIcon />
          <EdgeIcon />
          <ExplorerIcon />
        </Apps>
        <Task $w={104} $on><OperaLogo size={15} />Торговый бот Bybi...</Task>
        <Apps><RemoteIcon /><ChromeIcon /><CalculatorIcon /><SnipIcon /></Apps>
        <Task $w={99}><AfterburnerIcon />MSI Afterburner</Task>
        <Task $w={99}><ConsoleIcon />C:\WINDOWS\syst...</Task>
        <Tray>
          <ChevronUp size={10} />
          <NetworkIcon />
          <VolumeX size={10} />
          <span>ENG</span>
          <time>9:33<br />05.06.2024</time>
          <MessageSquare size={13} strokeWidth={1.7} />
        </Tray>
      </TaskBar>
    </Window>
  );
}
